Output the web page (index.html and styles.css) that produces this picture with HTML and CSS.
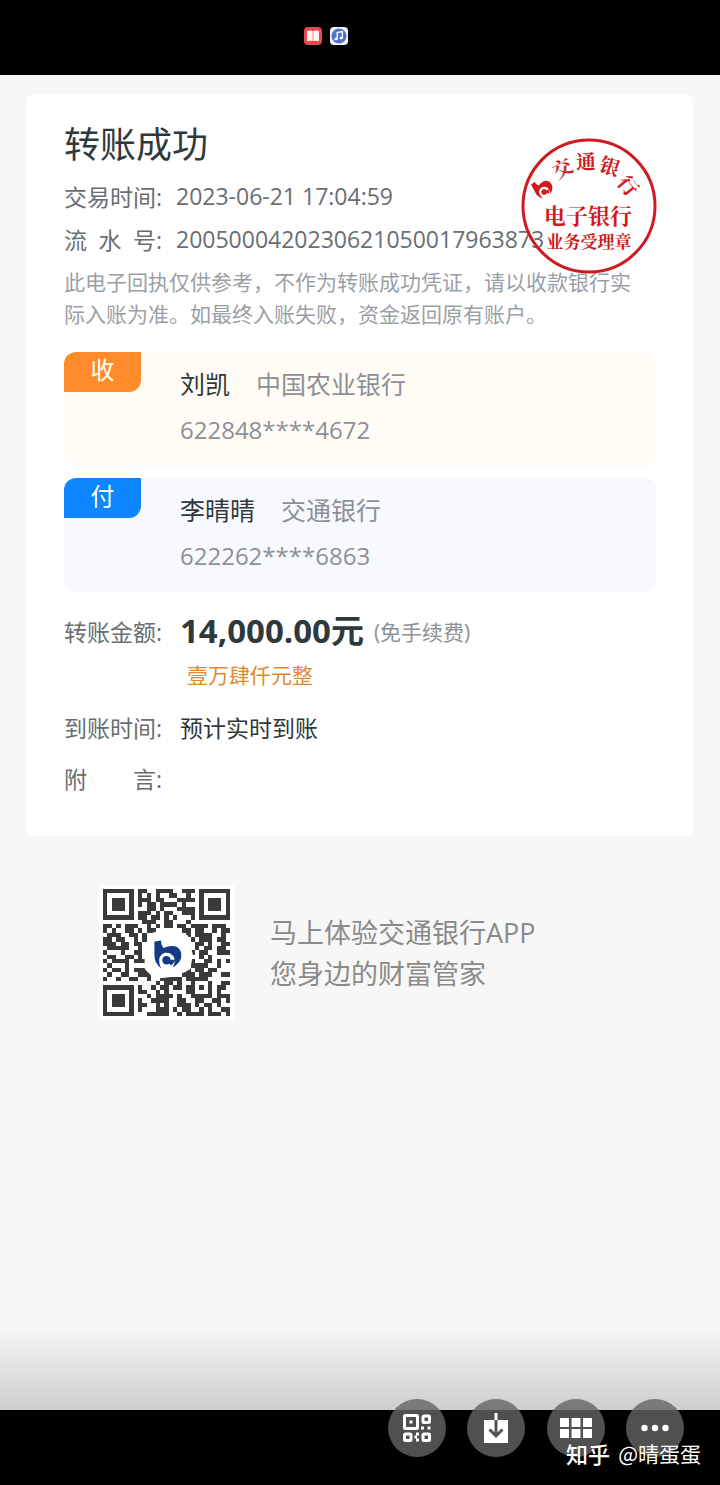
FILE: index.html
```html
<!DOCTYPE html>
<html lang="zh-CN">
<head>
    <meta charset="UTF-8">
    <meta name="viewport" content="width=device-width, initial-scale=1.0">
    <title>转账成功</title>
    <link rel="stylesheet" href="styles.css">
</head>
<body>
    <header class="status-bar">
        <svg class="status-icon" viewBox="0 0 18 18">
            <rect width="18" height="18" rx="4" fill="#e5484f"/>
            <path d="M3 4Q6 3 8.700 4V14Q6 13.300 3 14ZM9.300 4Q12 3 15 4V14Q12 13.300 9.300 14Z" fill="#fff2ef"/>
        </svg>
        <svg class="status-icon" viewBox="0 0 18 18">
            <rect width="18" height="18" rx="4" fill="#f4f6ff"/>
            <circle cx="9" cy="9" r="7.600" fill="#5573c9"/>
            <path d="M7.200 12V5.600L12.400 4.600V11" fill="none" stroke="#fff" stroke-width="1.300"/>
            <ellipse cx="6" cy="12" rx="1.700" ry="1.300" fill="#fff"/>
            <ellipse cx="11.200" cy="11" rx="1.700" ry="1.300" fill="#fff"/>
        </svg>
    </header>

    <main class="page">
        <section class="receipt">
            <h1 class="receipt-title">转账成功</h1>
            <dl class="receipt-meta">
                <div class="meta-row">
                    <dt class="label"><span>交</span><span>易</span><span>时</span><span>间:</span></dt>
                    <dd>2023-06-21 17:04:59</dd>
                </div>
                <div class="meta-row">
                    <dt class="label"><span>流</span><span>水</span><span>号:</span></dt>
                    <dd>2005000420230621050017963873</dd>
                </div>
            </dl>
            <p class="notice">此电子回执仅供参考，不作为转账成功凭证，请以收款银行实际入账为准。如最终入账失败，资金返回原有账户。</p>

            <div class="party payee">
                <span class="party-tag">收</span>
                <p class="party-name">刘凯<span class="party-bank">中国农业银行</span></p>
                <p class="party-account">622848****4672</p>
            </div>
            <div class="party payer">
                <span class="party-tag">付</span>
                <p class="party-name">李晴晴<span class="party-bank">交通银行</span></p>
                <p class="party-account">622262****6863</p>
            </div>

            <dl class="details">
                <div class="detail-row">
                    <dt class="label"><span>转</span><span>账</span><span>金</span><span>额:</span></dt>
                    <dd><strong class="amount">14,000.00元</strong><span class="fee">(免手续费)</span></dd>
                </div>
                <div class="detail-row">
                    <dd class="amount-words">壹万肆仟元整</dd>
                </div>
                <div class="detail-row arrival">
                    <dt class="label"><span>到</span><span>账</span><span>时</span><span>间:</span></dt>
                    <dd>预计实时到账</dd>
                </div>
                <div class="detail-row">
                    <dt class="label"><span>附</span><span>言:</span></dt>
                </div>
            </dl>

            <svg class="stamp" viewBox="0 0 136 136">
                <symbol id="bank-logo" viewBox="0 0 80 80">
                    <path d="M0 4L20 0Q18 12 27 22Q50 12 66 20Q80 30 77 50Q72 67 52 78Q63 62 56 48Q46 33 30 36Q14 42 14 58Q14 70 20 80Q0 66 0 40Z"/>
                    <path d="M46 56H60Q56 68 48 72Q44 66 38 64Z"/>
                    <circle cx="35" cy="57" r="12"/>
                </symbol>
                <circle cx="68" cy="68" r="66" fill="none" stroke="#cf1a20" stroke-width="3"/>
                <g transform="rotate(-28 23 50)">
                    <use href="#bank-logo" x="13" y="40" width="19" height="19"/>
                </g>
                <g class="stamp-arc">
                    <text transform="rotate(-29 41 30)" x="41" y="38">交</text>
                    <text transform="rotate(-2 65 23)" x="65" y="31">通</text>
                    <text transform="rotate(18 89 28)" x="89" y="36">银</text>
                    <text transform="rotate(50 107 48)" x="107" y="55">行</text>
                </g>
                <text class="stamp-main" x="67" y="86">电子银行</text>
                <text class="stamp-sub" x="68" y="110">业务受理章</text>
            </svg>
        </section>

        <section class="promo">
            <svg class="qr" viewBox="0 0 29 29" shape-rendering="crispEdges">
                <path id="qr-modules" stroke="#3a3a3a" stroke-width="1"/>
                <g shape-rendering="auto">
                    <path d="M10 13L11.500 10.500L14 9.800L16 10L19 11L20 15L19.500 18L16.500 19.500L12 20L10 18Z" fill="#fff" stroke="#fff" stroke-linejoin="round"/>
                    <use class="qr-logo" href="#bank-logo" x="11.700" y="11.700" width="6.400" height="6.400"/>
                </g>
            </svg>
            <p class="promo-text">马上体验交通银行APP<br>您身边的财富管家</p>
        </section>
    </main>

    <footer class="bottom-bar">
        <div class="actions">
            <button class="action" type="button" aria-label="识别二维码">
                <svg viewBox="0 0 28 28" fill="none" stroke="#fff" stroke-width="3">
                    <rect x="1.500" y="1.500" width="13" height="13" rx="1"/>
                    <rect x="20" y="2" width="6.500" height="6.500" rx="1"/>
                    <rect x="1.500" y="20" width="6.500" height="6.500" rx="1"/>
                    <rect x="20" y="20" width="6.500" height="6.500" rx="1"/>
                    <path d="M6.500 8H9.500M18 14H21M24.500 14H27.500M13 20H16M13 26H16M11.500 23H14"/>
                </svg>
            </button>
            <button class="action" type="button" aria-label="下载">
                <svg viewBox="0 0 28 32" fill="none">
                    <path d="M2 8H26V31H2Z" fill="#fff"/>
                    <path d="M14 1V8" stroke="#fff" stroke-width="3"/>
                    <path d="M14 8V24M7.500 17.500L14 24L20.500 17.500" stroke="#555" stroke-width="3"/>
                </svg>
            </button>
            <button class="action action-wide" type="button" aria-label="全部图片">
                <svg viewBox="0 0 32 22" fill="#fff">
                    <path d="M0 1H9V10H0ZM11.500 1H20.500V10H11.500ZM23 1H32V10H23ZM0 12H9V21H0ZM11.500 12H20.500V21H11.500ZM23 12H32V21H23Z"/>
                </svg>
            </button>
            <button class="action" type="button" aria-label="更多">
                <svg viewBox="0 0 28 8" fill="#fff">
                    <circle cx="3.500" cy="4" r="3.200"/><circle cx="14" cy="4" r="3.200"/><circle cx="24.500" cy="4" r="3.200"/>
                </svg>
            </button>
        </div>
        <p class="watermark"><b>知乎</b><span>@晴蛋蛋</span></p>
    </footer>

    <script>
        // One string per row of QR modules
        const rows = [
            '#######.##..####..###.#######',
            '#.....#.#.#.#..##..#..#.....#',
            '#.###.#.###.##...####.#.###.#',
            '#.###.#.#.##.####.#...#.###.#',
            '#.###.#...##.#...####.#.###.#',
            '#.....#.###.#.##..###.#.....#',
            '#######.##.##.#.#...#.#######',
            '.........###..##...#.........',
            '##.#.###..#.#.##.##.####.###.',
            '#.#..##.#.##......##.##..#.##',
            '.###..##.#.........#.####..#.',
            '##.##..#.#..........#.###.##.',
            '###.##.##............##.#..##',
            '.#####..#............#.##.##.',
            '#...#..##...........#.##..###',
            '.##..##.#..........#..#.#....',
            '#.####.###.........##..##.#.#',
            '.#...#..............####..#..',
            '#.##.#.###.........#.##.##...',
            '.#..##..###.......###.###..##',
            '#..#..##..#..#####.#####.....',
            '............#.##.#..#...#..##',
            '#######.#..#.##.##.##.#.#.##.',
            '#.....#.##..#.#....##...#.#..',
            '#.###.#...#.####.#..#####.###',
            '#.###.#.#..####..##..##..##.#',
            '#.###.#.##..#.#..###.#.##.#..',
            '#.....#.#...###.#.##..#.#..##',
            '#######...#####..#.####.###.#'
        ];
        let d = '';
        rows.forEach((row, y) => {
            [...row].forEach((cell, x) => {
                if (cell === '#') d += `M${x} ${y + 0.5}h1`;
            });
        });
        document.getElementById('qr-modules').setAttribute('d', d);
    </script>
</body>
</html>
```
FILE: styles.css
```css
* {
    box-sizing: border-box;
}

body {
    margin: 0;
    min-height: 100vh;
    display: flex;
    flex-direction: column;
    background-color: #000;
    font-family: 'Open Sans', 'Noto Sans CJK SC', sans-serif;
    font-size: 23px;
    color: #2f383b;
}

h1, p, dl, dd {
    margin: 0;
}

.status-bar {
    display: flex;
    align-items: center;
    gap: 8px;
    height: 75px;
    padding: 0 304px 3px;
}

.status-icon {
    width: 18px;
    height: 18px;
    flex: none;
}

.page {
    flex: 1;
    padding: 19px 27px 0 26px;
    background: linear-gradient(to top, #cecece, #f7f7f7 84px);
}

.receipt {
    position: relative;
    padding: 27px 37px 37px 38px;
    background-color: #fff;
    border-radius: 8px;
}

.receipt-title {
    font-size: 36px;
    font-weight: normal;
    line-height: 48px;
    margin-bottom: 5px;
}

.meta-row {
    display: flex;
    align-items: center;
    gap: 14px;
    height: 43px;
    color: #686e72;
}

.label {
    display: flex;
    justify-content: space-between;
    width: 98px;
    flex: none;
    color: #686e72;
}

.notice {
    margin: 6px 16px 22px 0;
    font-size: 21px;
    line-height: 32px;
    color: #9a9fa5;
}

/* payee / payer blocks */
.party {
    position: relative;
    height: 114px;
    margin-bottom: 12px;
    padding: 10px 0 0 116px;
    border-radius: 10px;
    line-height: 45px;
}

.payee {
    background-color: #fffcf5;
}

.payer {
    background-color: #f7f9ff;
}

.party-tag {
    position: absolute;
    top: 0;
    left: 0;
    width: 77px;
    height: 40px;
    border-radius: 12px 0;
    font-size: 24px;
    line-height: 36px;
    text-align: center;
    color: #fff;
}

.payee .party-tag {
    background-color: #ff8b2a;
}

.payer .party-tag {
    background-color: #0e86ff;
}

.party-name {
    font-size: 25px;
    height: 45px;
}

.party-bank {
    margin-left: 26px;
    color: #8d9097;
}

.party-account {
    font-size: 24px;
    color: #8d9097;
}

/* amount, arrival time, remark */
.details {
    padding-top: 5px;
}

.detail-row {
    display: flex;
    align-items: center;
    gap: 18px;
    height: 43px;
}

.detail-row dd {
    display: flex;
    align-items: center;
}

.amount {
    font-size: 33px;
    line-height: 43px;
}

.fee {
    margin-left: 10px;
    font-size: 21px;
    color: #8d9097;
}

.detail-row .amount-words {
    margin-left: 123px;
    font-size: 21px;
    color: #e08a2e;
}

.detail-row.arrival {
    margin: 10px 0 8px;
}

.stamp {
    position: absolute;
    top: 44px;
    right: 36px;
    width: 136px;
    height: 136px;
    fill: #cf1a20;
    font-family: 'Noto Serif CJK SC', 'Noto Sans CJK SC', serif;
    font-weight: bold;
    text-anchor: middle;
}

.stamp-arc {
    font-size: 20px;
}

.stamp-main {
    font-size: 22px;
}

.stamp-sub {
    font-size: 17px;
}

.promo {
    display: flex;
    align-items: center;
    gap: 36px;
    margin: 49px 0 0 73px;
}

.qr {
    width: 135px;
    height: 135px;
    padding: 4px;
    background-color: #fff;
}

.qr-logo {
    fill: #123a85;
}

.promo-text {
    font-size: 27px;
    line-height: 41px;
    color: #8a8a8a;
}

.bottom-bar {
    position: relative;
    height: 75px;
}

/* the round buttons overlap the edge of the page */
.actions {
    position: absolute;
    top: -11px;
    right: 36px;
    display: flex;
    justify-content: space-between;
    width: 296px;
}

.action {
    display: flex;
    align-items: center;
    justify-content: center;
    width: 58px;
    height: 58px;
    padding: 0;
    border: 0;
    border-radius: 50%;
    background-color: rgba(100, 100, 100, 0.8);
}

.action svg {
    width: 28px;
}

.action-wide svg {
    width: 32px;
}

.watermark {
    position: absolute;
    right: 19px;
    bottom: 16px;
    display: flex;
    align-items: center;
    gap: 8px;
    font-family: 'Noto Sans CJK SC', sans-serif;
    font-size: 21px;
    line-height: 32px;
    color: #fff;
}

.watermark b {
    font-size: 22px;
    font-weight: 500;
}
```
